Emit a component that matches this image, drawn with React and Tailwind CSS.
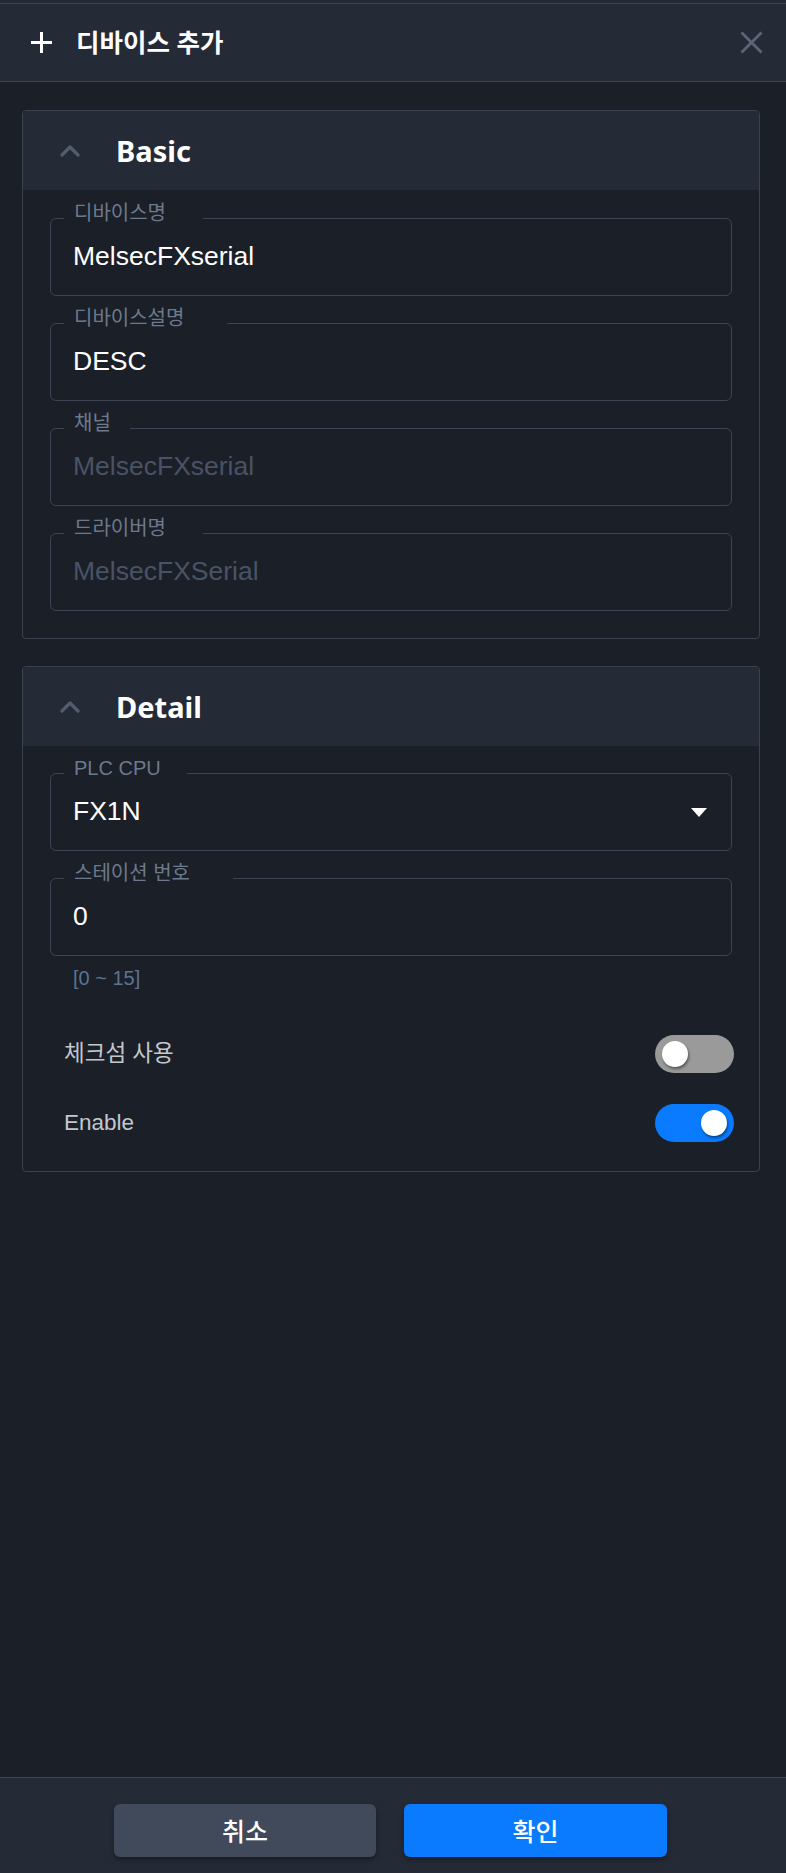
import React, { useState } from "react";

const FONT = "font-['Liberation_Sans','Noto_Sans_CJK_KR',sans-serif]";
const HEAD = "font-['Noto_Sans','Noto_Sans_CJK_KR',sans-serif]";

const Field = ({ label, notch, value, disabled, select }) => (
  <div className="relative h-[78px] rounded-[6px] border border-[#3d4554] flex items-center pl-[22px] pr-[24px] pb-[3px]">
    <span
      className={`absolute left-[13px] top-[-18px] px-[10px] leading-[24px] text-[20px] text-[#6c7a8e] bg-[#1b1f27] whitespace-nowrap ${notch}`}
    >
      {label}
    </span>
    <span className={`flex-1 text-[26.5px] leading-[32px] ${disabled ? "text-[#495365]" : "text-white"}`}>
      {value}
    </span>
    {select && (
      <svg width="16" height="9" viewBox="0 0 16 9" className="mt-[4px]">
        <polygon points="0,0 16,0 8,9" fill="#ffffff" />
      </svg>
    )}
  </div>
);

const Toggle = ({ on, onClick }) => (
  <button
    onClick={onClick}
    className={`relative w-[79px] h-[38px] rounded-full flex items-center px-[7px] ${
      on ? "bg-[#0a7bff] justify-end" : "bg-[#9a9a9a] justify-start"
    }`}
  >
    <span className="w-[26px] h-[26px] rounded-full bg-white shadow-[1px_2px_3px_rgba(0,0,0,0.45)]" />
  </button>
);

const Panel = ({ title, children }) => {
  const [open, setOpen] = useState(true);
  return (
    <div className="rounded-[4px] border border-[#3a4250] overflow-hidden">
      <div
        className="h-[79px] bg-[#252b36] flex items-center pl-[37px] cursor-pointer"
        onClick={() => setOpen(!open)}
      >
        <svg width="20" height="12" viewBox="0 0 20 12" className="mt-[1px]">
          <polyline
            points="2,10 10,2 18,10"
            fill="none"
            stroke="#535d6e"
            strokeWidth="3.2"
            strokeLinecap="round"
            strokeLinejoin="round"
          />
        </svg>
        <span className={`${HEAD} ml-[36px] text-[29px] font-bold text-white leading-none`}>{title}</span>
      </div>
      {open && children}
    </div>
  );
};

export default function App() {
  const [checksum, setChecksum] = useState(false);
  const [enable, setEnable] = useState(true);

  return (
    <div className={`${FONT} h-[1873px] flex flex-col bg-[#1b1f27]`}>
      <div className="bg-[#252b36] pt-[3px]">
        <div className="h-[79px] border-t border-b border-[#3d4554] flex items-center pl-[30px] pr-[23px]">
          <svg width="23" height="23" viewBox="0 0 23 23">
            <line x1="11.5" y1="1" x2="11.5" y2="22" stroke="#ffffff" strokeWidth="3" />
            <line x1="1" y1="11.5" x2="22" y2="11.5" stroke="#ffffff" strokeWidth="3" />
          </svg>
          <span className={`${HEAD} ml-[23px] text-[25.5px] font-bold text-white`}>디바이스 추가</span>
          <button className="ml-auto">
            <svg width="23" height="23" viewBox="0 0 23 23">
              <line x1="1.5" y1="1.5" x2="21.5" y2="21.5" stroke="#5b6577" strokeWidth="2.8" />
              <line x1="21.5" y1="1.5" x2="1.5" y2="21.5" stroke="#5b6577" strokeWidth="2.8" />
            </svg>
          </button>
        </div>
      </div>

      <div className="flex-1 pt-[28px] pl-[22px] pr-[26px] flex flex-col gap-[27px]">
        <Panel title="Basic">
          <div className="pt-[28px] pb-[27px] pl-[27px] pr-[27px] flex flex-col gap-[27px]">
            <Field label="디바이스명" notch="w-[139px]" value="MelsecFXserial" />
            <Field label="디바이스설명" notch="w-[163px]" value="DESC" />
            <Field label="채널" notch="w-[66px]" value="MelsecFXserial" disabled />
            <Field label="드라이버명" notch="w-[139px]" value="MelsecFXSerial" disabled />
          </div>
        </Panel>

        <Panel title="Detail">
          <div className="pt-[27px] pb-[29px] pl-[27px] pr-[27px] flex flex-col">
            <Field label="PLC CPU" notch="w-[123px]" value="FX1N" select />
            <div className="mt-[27px]">
              <Field label="스테이션 번호" notch="w-[169px]" value="0" />
            </div>
            <div className="mt-[11px] pl-[23px] text-[20px] leading-[23px] text-[#5b7391]">[0 ~ 15]</div>
            <div className="mt-[45px] ml-[14px] mr-[-2px] flex items-center justify-between">
              <span className="text-[22.5px] text-[#c3c7ce]">체크섬 사용</span>
              <Toggle on={checksum} onClick={() => setChecksum(!checksum)} />
            </div>
            <div className="mt-[31px] ml-[14px] mr-[-2px] flex items-center justify-between">
              <span className="text-[22.5px] text-[#c3c7ce]">Enable</span>
              <Toggle on={enable} onClick={() => setEnable(!enable)} />
            </div>
          </div>
        </Panel>
      </div>

      <div className="h-[96px] bg-[#252b36] border-t border-[#3d4554] flex justify-center gap-[28px] pt-[26px] pr-[5px]">
        <button className="w-[262px] h-[53px] rounded-[6px] bg-[#414a5a] text-white text-[25px] font-medium shadow-[0_3px_5px_rgba(0,0,0,0.35)] font-['Noto_Sans_CJK_KR',sans-serif]">
          취소
        </button>
        <button className="w-[263px] h-[53px] rounded-[6px] bg-[#0a7bff] text-white text-[25px] font-medium shadow-[0_3px_5px_rgba(0,0,0,0.35)] font-['Noto_Sans_CJK_KR',sans-serif]">
          확인
        </button>
      </div>
    </div>
  );
}
